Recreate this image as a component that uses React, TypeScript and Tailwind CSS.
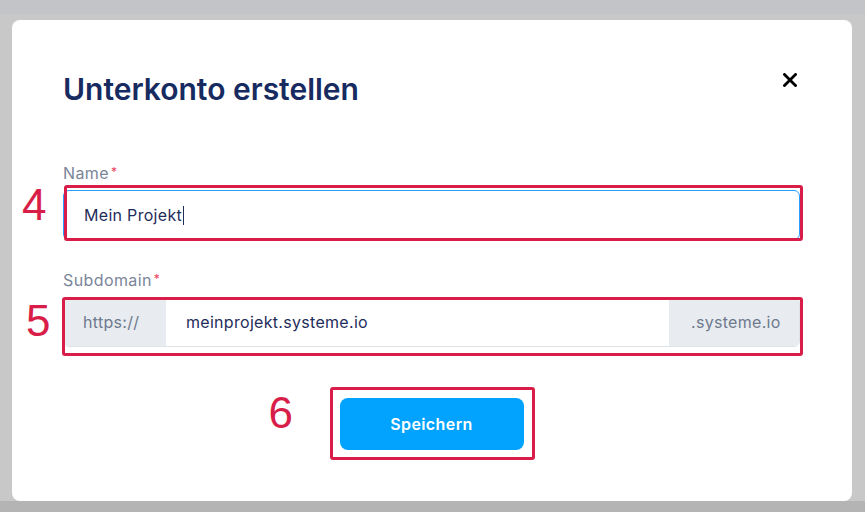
import React from 'react';

const Marker = ({ n, className }: { n: string; className: string }) => (
    <span
        className={`absolute text-[44px] leading-[44px] text-[#d81e48] ${className}`}
        style={{ fontFamily: '"Liberation Sans", Arial, sans-serif' }}
    >
        {n}
    </span>
);

const Label = ({ children }: { children: React.ReactNode }) => (
    <label className="flex items-start text-[16px] leading-6 tracking-[0.4px] text-[#7a8599] mb-[5px]">
        {children}
        <span className="text-[12px] leading-4 text-[#ea3c5e] ml-[2px] mt-[3px]">*</span>
    </label>
);

const CloseIcon = () => (
    <svg width="14" height="14" viewBox="0 0 14 14" className="mr-[3px] mt-[2px]">
        <path d="M1.5 1.5 12.5 12.5M12.5 1.5 1.5 12.5" stroke="#000" strokeWidth="2.8" strokeLinecap="square" />
    </svg>
);

export default function App() {
    return (
        <div className="h-[512px] w-full flex flex-col bg-[#c8c8c8] overflow-hidden" style={{ fontFamily: 'Inter, "Noto Sans", sans-serif' }}>
            <div className="h-[14px] bg-[#c3c4c8]" />
            <div className="flex-1 px-[12px] pt-[6px]">
                <div className="w-[840px] h-[481px] bg-white rounded-[8px] flex flex-col pt-[51px] pl-[51px] pr-[52px]">
                    <div className="flex justify-between items-start h-9">
                        <h2 className="text-[30px] leading-9 font-semibold text-[#172b61]">Unterkonto erstellen</h2>
                        <CloseIcon />
                    </div>

                    <div className="mt-[54px]">
                        <Label>Name</Label>
                        <div className="relative">
                            <div className="h-[50px] border border-[#2a9dff] rounded-[6px] flex items-center pl-[20px] text-[16px] tracking-[0.3px] text-[#1f2d5a]">
                                Mein Projekt
                                <span className="w-px h-[19px] bg-[#1f2d5a] ml-px" />
                            </div>
                            <div className="absolute -top-[5px] left-[1px] -right-[3px] -bottom-[1px] border-[3px] border-[#d81e48] rounded-[3px]" />
                            <Marker n="4" className="-left-[41px] -top-[7px]" />
                        </div>
                    </div>

                    <div className="mt-[28px]">
                        <Label>Subdomain</Label>
                        <div className="relative">
                            <div className="h-[50px] border border-[#dfe3e8] rounded-[6px] flex text-[16px] tracking-[0.3px] overflow-hidden">
                                <div className="w-[102px] bg-[#e8ebef] flex items-center pl-[19px] text-[#6e7a8e]">https://</div>
                                <div className="flex-1 flex items-center pl-[20px] text-[#1f2d5a]">meinprojekt.systeme.io</div>
                                <div className="w-[130px] bg-[#e8ebef] flex items-center pl-[22px] text-[#6e7a8e]">.systeme.io</div>
                            </div>
                            <div className="absolute top-0 -left-[1px] -right-[3px] -bottom-[9px] border-[3px] border-[#d81e48] rounded-[3px]" />
                            <Marker n="5" className="-left-[37px] top-[2px]" />
                        </div>
                    </div>

                    <div className="relative self-center mt-[51px]">
                        <button className="w-[184px] h-[52px] rounded-[8px] bg-[#02a3fe] text-white text-[16px] tracking-[0.4px] font-semibold">
                            Speichern
                        </button>
                        <div className="absolute -top-[11px] -left-[10px] -right-[11px] -bottom-[10px] border-[3px] border-[#d81e48] rounded-[3px]" />
                        <Marker n="6" className="-left-[71px] -top-[7px]" />
                    </div>
                </div>
            </div>
            <div className="h-[11px] bg-[#b4b4b4]" />
        </div>
    );
}
